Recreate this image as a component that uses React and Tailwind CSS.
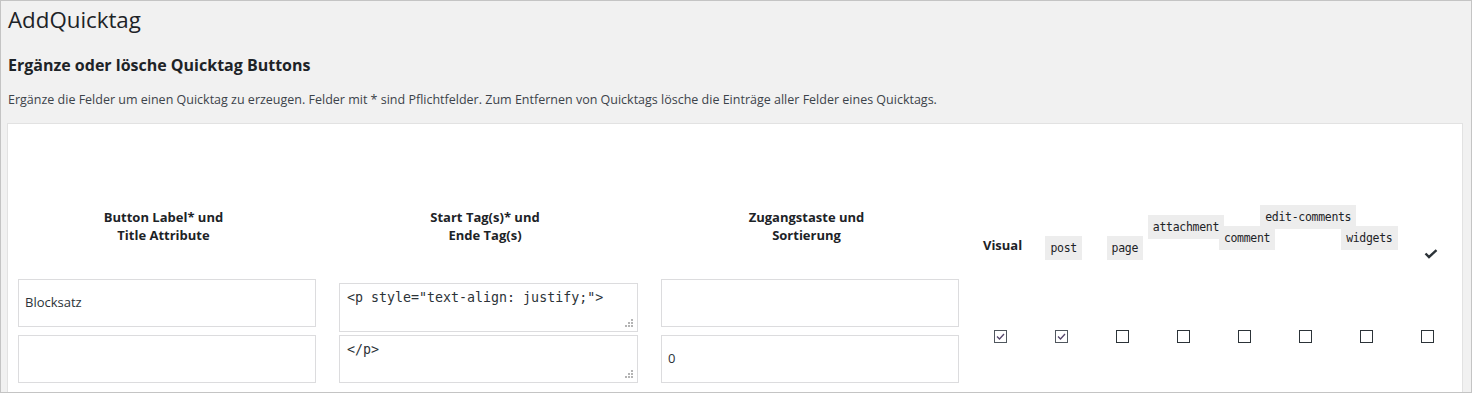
const sans = { fontFamily: '"Open Sans", "Noto Sans", sans-serif' };

const types = [
  { label: "post", pt: "pt-[112px]" },
  { label: "page", pt: "pt-[112px]" },
  { label: "attachment", pt: "pt-[91px]" },
  { label: "comment", pt: "pt-[102px]" },
  { label: "edit-comments", pt: "pt-[81px]" },
  { label: "widgets", pt: "pt-[102px]" },
];

const checks = [true, true, false, false, false, false, false, false];

function Code({ children }) {
  return (
    <span className="inline-block shrink-0 whitespace-nowrap bg-[#ededed] px-[5px] pt-[3px] pb-[2px] font-['DejaVu_Sans_Mono',monospace] text-[11.5px] leading-[19px] tracking-[-0.3px] text-[#1d2327]">
      {children}
    </span>
  );
}

function ColHead({ lines }) {
  return (
    <div className="flex shrink-0 justify-center pt-[84px] pr-[7px] text-center text-[13px] font-bold leading-[18px] text-[#1d2327]">
      <div>
        {lines.map((l) => (
          <div key={l}>{l}</div>
        ))}
      </div>
    </div>
  );
}

function Grip() {
  return (
    <svg width="9" height="9" viewBox="0 0 9 9" className="absolute right-[3px] bottom-[3px]">
      {[
        [6, 0],
        [3, 3],
        [6, 3],
        [0, 6],
        [3, 6],
        [6, 6],
      ].map(([x, y]) => (
        <rect key={x + "-" + y} x={x} y={y} width="2" height="2" fill="#b4b4b4" />
      ))}
    </svg>
  );
}

function Field({ value, h = "h-[48px]" }) {
  return (
    <div className={`flex ${h} items-center border border-[#dcdcde] bg-white px-[6px] text-[13px] text-[#2c3338]`}>
      {value}
    </div>
  );
}

function Area({ value, h = "h-[48px]" }) {
  return (
    <div className={`relative ${h} border border-[#dcdcde] bg-white px-[7px] pt-[5px] font-['DejaVu_Sans_Mono',monospace] text-[13.3px] leading-[18px] whitespace-pre text-[#2c3338]`}>
      {value}
      <Grip />
    </div>
  );
}

function Box({ checked }) {
  return (
    <div className={`flex h-[13px] w-[13px] items-center justify-center border bg-white ${checked ? "border-[#50575e]" : "border-[#2c3338]"}`}>
      {checked && (
        <svg width="9" height="7" viewBox="0 0 9 7">
          <path d="M1 3.5 L3.5 6 L8 1" fill="none" stroke="#54456a" strokeWidth="1.3" />
        </svg>
      )}
    </div>
  );
}

export default function App() {
  return (
    <div
      style={sans}
      className="h-[393px] w-[1472px] overflow-hidden border border-[#c4c4c4] bg-[#f1f1f1] pr-[8px] pl-[6px] text-[#1d2327]"
    >
      <h1 className="pt-[4px] pl-[1px] text-[22.3px] leading-[30px] font-normal">AddQuicktag</h1>
      <h2 className="mt-[20px] pl-[1px] text-[16px] leading-[20px] font-bold">Ergänze oder lösche Quicktag Buttons</h2>
      <p className="mt-[16px] pl-[1px] text-[12.5px] leading-[18px] text-[#3c434a]">
        Ergänze die Felder um einen Quicktag zu erzeugen. Felder mit * sind Pflichtfelder. Zum Entfernen von Quicktags lösche die Einträge aller Felder eines Quicktags.
      </p>

      <div className="mt-[14px] border border-[#e2e2e2] bg-white pl-[10px]">
        <div className="flex h-[155px] items-start">
          <div className="w-[298px]">
            <ColHead lines={["Button Label* und", "Title Attribute"]} />
          </div>
          <div className="ml-[23px] w-[299px]">
            <ColHead lines={["Start Tag(s)* und", "Ende Tag(s)"]} />
          </div>
          <div className="ml-[23px] w-[298px]">
            <ColHead lines={["Zugangstaste und", "Sortierung"]} />
          </div>
          <div className="ml-[10.5px] flex items-start">
            <div className="flex w-[61.125px] items-start justify-center pt-[112px] pl-[5px] text-[13px] font-bold leading-[18px]">
              Visual
            </div>
            {types.map((t) => (
              <div key={t.label} className={`flex w-[61.125px] items-start justify-center ${t.pt} pl-[5px]`}>
                <Code>{t.label}</Code>
              </div>
            ))}
            <div className="flex w-[61.125px] items-start justify-center pt-[125px] pl-[6px]">
              <svg width="14" height="10" viewBox="0 0 14 10">
                <path d="M1.5 4.5 L5 8 L12.5 1.2" fill="none" stroke="#2c3338" strokeWidth="2.4" />
              </svg>
            </div>
          </div>
        </div>

        <div className="flex items-start pb-[20px]">
          <div className="flex w-[298px] flex-col gap-[8px]">
            <Field value="Blocksatz" />
            <Field value="" />
          </div>
          <div className="ml-[23px] flex w-[299px] flex-col gap-[3px] pt-[4px]">
            <Area value={'<p style="text-align: justify;">'} h="h-[49px]" />
            <Area value="</p>" />
          </div>
          <div className="ml-[23px] flex w-[298px] flex-col gap-[8px]">
            <Field value="" />
            <Field value="0" />
          </div>
          <div className="ml-[10.5px] flex pt-[51px]">
            {checks.map((c, i) => (
              <div key={i} className="flex w-[61.125px] justify-center">
                <Box checked={c} />
              </div>
            ))}
          </div>
        </div>
      </div>
    </div>
  );
}
